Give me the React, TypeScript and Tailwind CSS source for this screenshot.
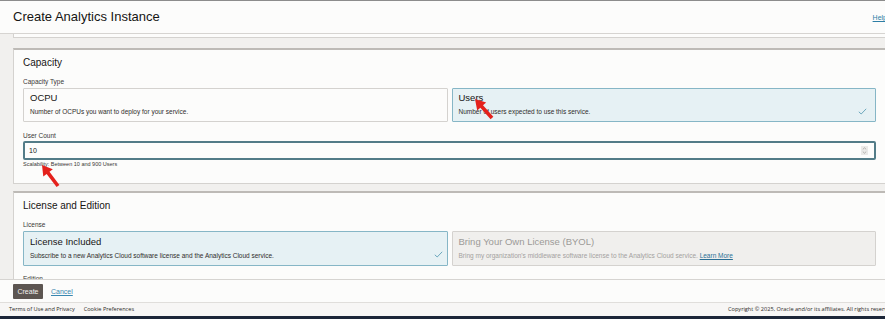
import React from "react";

const Check = ({ className = "" }: { className?: string }) => (
  <svg width="9" height="7" viewBox="0 0 9 7" className={className}>
    <path d="M0.8 3.8 L3.2 6 L8.2 0.8" fill="none" stroke="#5f9fb5" strokeWidth="0.9" />
  </svg>
);

const Arrow = ({ x1, y1, x2, y2 }: { x1: number; y1: number; x2: number; y2: number }) => {
  const dx = x2 - x1;
  const dy = y2 - y1;
  const len = Math.sqrt(dx * dx + dy * dy);
  const ux = dx / len;
  const uy = dy / len;
  const px = -uy;
  const py = ux;
  const headLen = 10;
  const headW = 6;
  const shaftW = 1.8;
  const bx = x1 + ux * headLen;
  const by = y1 + uy * headLen;
  const pts = [
    [x1, y1],
    [bx + px * headW, by + py * headW],
    [bx + px * shaftW, by + py * shaftW],
    [x2 + px * shaftW, y2 + py * shaftW],
    [x2 - px * shaftW, y2 - py * shaftW],
    [bx - px * shaftW, by - py * shaftW],
    [bx - px * headW, by - py * headW],
  ]
    .map((p) => p.join(","))
    .join(" ");
  return <polygon points={pts} fill="#e4211c" />;
};

export default function App() {
  const font = { fontFamily: '"Liberation Sans", Arial, sans-serif' };
  return (
    <div
      className="relative w-[885px] h-[319px] overflow-hidden bg-[#f1f0ee] text-[#161513] flex flex-col"
      style={font}
    >
      {/* Header */}
      <div className="h-[34px] shrink-0 bg-[#fcfcfb] border-t border-t-[#8c8c8c] border-b border-b-[#d6d4d1] flex items-start justify-between">
        <div className="pl-[13px] pt-[8px] text-[13px] leading-[16px] text-[#161513]">Create Analytics Instance</div>
        <a className="mt-[12px] mr-[-2px] text-[7px] leading-[9px] text-[#2d7ea5] underline">Help</a>
      </div>

      {/* Scroll area */}
      <div className="h-[245px] shrink-0 overflow-hidden flex flex-col">
        <div className="ml-[13px] mr-[-10px] h-[4px] shrink-0 bg-[#fcfcfb] border-l border-r border-b border-[#d4d2cf]" />

        {/* Capacity card */}
        <div className="mt-[10px] ml-[13px] mr-[-10px] shrink-0 bg-[#fcfcfb] border border-[#d4d2cf] border-t-2 border-t-[#bdbab6] px-[9px] pt-[7px] pb-[15px] flex flex-col">
          <div className="text-[10px] leading-[12px]">Capacity</div>
          <div className="mt-[9px] text-[6.5px] leading-[8px] text-[#3a3836]">Capacity Type</div>
          <div className="mt-[2px] flex gap-[4px] pr-[9px]">
            <div className="flex-1 h-[34px] border border-[#d4d2cf] bg-[#fcfcfb] rounded-[1px] px-[6px] pt-[3px]">
              <div className="text-[9.5px] leading-[12px]">OCPU</div>
              <div className="mt-[3px] text-[6.5px] leading-[9px] text-[#2f2d2b]">Number of OCPUs you want to deploy for your service.</div>
            </div>
            <div className="flex-1 h-[34px] border border-[#86b6c6] bg-[#e6f1f4] rounded-[1px] px-[6px] pt-[3px] relative">
              <div className="text-[9.5px] leading-[12px]">Users</div>
              <div className="mt-[3px] text-[6.5px] leading-[9px] text-[#2f2d2b]">Number of users expected to use this service.</div>
              <Check className="absolute right-[8px] bottom-[6px]" />
            </div>
          </div>
          <div className="mt-[10px] text-[6.5px] leading-[8px] text-[#3a3836]">User Count</div>
          <div className="mt-[1px] mr-[9px] h-[19px] border-2 border-[#537c88] rounded-[2px] bg-[#fdfdfc] flex items-center justify-between pl-[4px] pr-[6px]">
            <span className="text-[7px] leading-[9px]">10</span>
            <svg width="7" height="9" viewBox="0 0 7 9">
              <rect x="0" y="0" width="7" height="9" fill="#ebeae8" />
              <path d="M1.8 3.4 L3.5 1.8 L5.2 3.4 M1.8 5.6 L3.5 7.2 L5.2 5.6" fill="none" stroke="#8f8d8a" strokeWidth="0.6" />
            </svg>
          </div>
          <div className="mt-[1px] text-[5.5px] leading-[7px] text-[#3a3836]">Scalability: Between 10 and 900 Users</div>
        </div>

        {/* License card */}
        <div className="mt-[7px] ml-[13px] mr-[-10px] shrink-0 bg-[#fcfcfb] border border-[#d4d2cf] border-t-2 border-t-[#bdbab6] px-[9px] pt-[7px] pb-[15px] flex flex-col">
          <div className="text-[10px] leading-[12px]">License and Edition</div>
          <div className="mt-[9px] text-[6.5px] leading-[8px] text-[#3a3836]">License</div>
          <div className="mt-[2px] flex gap-[4px] pr-[9px]">
            <div className="flex-1 h-[35px] border border-[#86b6c6] bg-[#e6f1f4] rounded-[1px] px-[6px] pt-[4px] relative">
              <div className="text-[9.5px] leading-[12px]">License Included</div>
              <div className="mt-[3px] text-[6.5px] leading-[9px] text-[#2f2d2b]">Subscribe to a new Analytics Cloud software license and the Analytics Cloud service.</div>
              <Check className="absolute right-[4px] bottom-[7px]" />
            </div>
            <div className="flex-1 h-[35px] border border-[#d4d2cf] bg-[#f0efed] rounded-[1px] px-[6px] pt-[4px]">
              <div className="text-[9.5px] leading-[12px] text-[#9c9a97]">Bring Your Own License (BYOL)</div>
              <div className="mt-[3px] text-[6.5px] leading-[9px] text-[#a3a19e]">
                Bring my organization's middleware software license to the Analytics Cloud service.{" "}
                <a className="text-[#2a6f95] underline">Learn More</a>
              </div>
            </div>
          </div>
          <div className="mt-[9px] text-[6.5px] leading-[8px] text-[#3a3836]">Edition</div>
        </div>
      </div>

      {/* Action bar */}
      <div className="h-[23px] shrink-0 bg-[#fcfcfb] border-t border-[#d6d4d1] flex items-center pl-[13px] gap-[8px]">
        <button className="h-[15px] w-[30px] bg-[#5c5551] text-[#f4f2f0] text-[7px] leading-[9px] rounded-[1px] flex items-center justify-center">Create</button>
        <a className="text-[7px] leading-[9px] text-[#3a87b0] underline">Cancel</a>
      </div>

      {/* Footer */}
      <div className="h-[14px] shrink-0 bg-[#f7f6f5] border-t border-[#e0dedb] flex items-center justify-between pl-[9px]">
        <div className="flex gap-[9px] text-[5.6px] leading-[7px] text-[#2b2a28]" style={{ fontFamily: '"Open Sans", "Noto Sans", sans-serif' }}>
          <span>Terms of Use and Privacy</span>
          <span>Cookie Preferences</span>
        </div>
        <div className="mr-[-10px] text-[5.6px] leading-[7px] text-[#2b2a28] whitespace-nowrap" style={{ fontFamily: '"Open Sans", "Noto Sans", sans-serif' }}>
          Copyright © 2025, Oracle and/or its affiliates. All rights reserved.
        </div>
      </div>

      <div className="h-[3px] shrink-0 bg-[#1c2638]" />

      <svg className="absolute left-0 top-0 pointer-events-none" width="885" height="319">
        <Arrow x1={475} y1={99} x2={492} y2={118} />
        <Arrow x1={42} y1={165} x2={58} y2={186} />
      </svg>
    </div>
  );
}
